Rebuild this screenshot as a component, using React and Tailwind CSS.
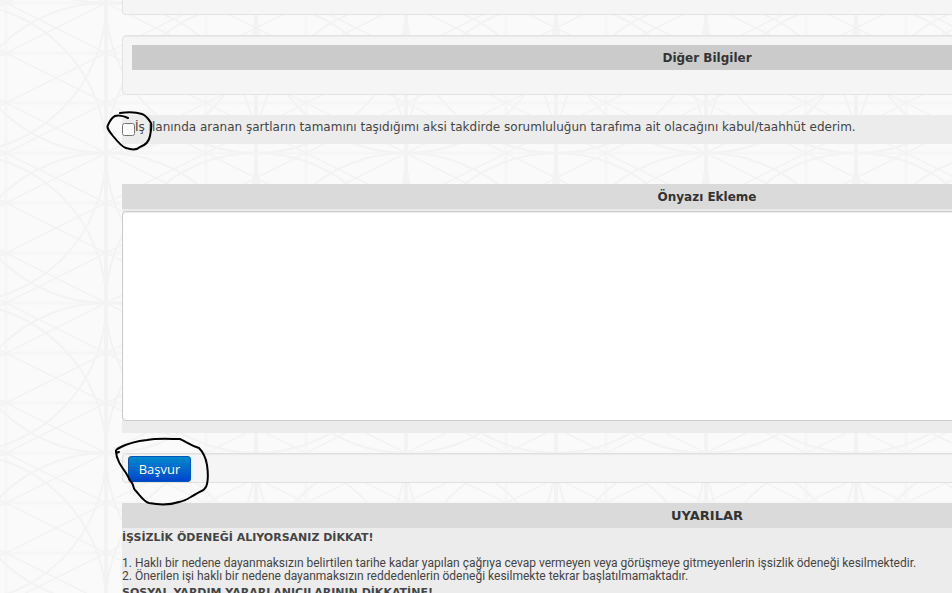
import { useState } from 'react';

const NOTICES = [
  'Haklı bir nedene dayanmaksızın belirtilen tarihe kadar yapılan çağrıya cevap vermeyen veya görüşmeye gitmeyenlerin işsizlik ödeneği kesilmektedir.',
  'Önerilen işi haklı bir nedene dayanmaksızın reddedenlerin ödeneği kesilmekte tekrar başlatılmamaktadır.',
];

function BackgroundPattern() {
  return (
    <svg className="pointer-events-none absolute inset-0 -z-10 h-full w-full" aria-hidden="true">
      <defs>
        <pattern id="lattice" x="106" y="3" width="100" height="50" patternUnits="userSpaceOnUse">
          <path d="M0 0V50M100 0V50M0 0H100M0 50H100" stroke="#f6f6f6" strokeWidth="3" />
          <path d="M0 0L100 50M0 50L100 0" stroke="#f3f3f3" strokeWidth="1.6" />
        </pattern>
        <pattern id="rosette" x="106" y="3" width="150" height="150" patternUnits="userSpaceOnUse">
          <g fill="none" stroke="#f3f3f3" strokeWidth="2">
            <circle cx="0" cy="0" r="150" />
            <circle cx="150" cy="0" r="150" />
            <circle cx="0" cy="150" r="150" />
            <circle cx="150" cy="150" r="150" />
            <path d="M0 0V150M150 0V150" strokeWidth="4" />
          </g>
        </pattern>
      </defs>
      <rect width="100%" height="100%" fill="#fafafa" />
      <rect width="100%" height="100%" fill="url(#lattice)" />
      <rect width="100%" height="100%" fill="url(#rosette)" />
    </svg>
  );
}

function SectionTitle({ children, className = 'bg-[#dadada] text-[12px]' }) {
  return (
    <h2 className={`h-[25px] text-center leading-[26px] font-bold text-[#333] ${className}`}>
      {children}
    </h2>
  );
}

function App() {
  const [accepted, setAccepted] = useState(false);
  const [coverLetter, setCoverLetter] = useState('');

  return (
    <div className="relative isolate h-screen overflow-hidden pl-[122px] font-['DejaVu_Sans',sans-serif] text-[#444]">
      <BackgroundPattern />

      <main className="w-[1170px]">
        <div className="h-[15px] rounded-b border border-t-0 border-[#e3e3e3] bg-[#f5f5f5]" />

        <section className="mt-5 h-[60px] rounded border border-[#e3e3e3] bg-[#f5f5f5] p-[9px] shadow-[inset_0_1px_1px_rgba(0,0,0,0.05)]">
          <SectionTitle className="bg-[#cbcbcb] text-[12px]">Diğer Bilgiler</SectionTitle>
        </section>

        <div className="relative mt-5 h-[29px] bg-[#ececec]">
          <label className="flex items-start text-[12px] leading-6">
            <input
              type="checkbox"
              checked={accepted}
              onChange={(event) => setAccepted(event.target.checked)}
              className="mt-2 size-[13px] shrink-0"
            />
            <span>
              İş ilanında aranan şartların tamamını taşıdığımı aksi takdirde sorumluluğun tarafıma ait olacağını kabul/taahhüt ederim.
            </span>
          </label>
          <svg className="pointer-events-none absolute -top-1 -left-4" width="48" height="42" aria-hidden="true">
            <path
              d="M22 7C18 5 12 4 9 5C5 7 4 10 2 14C0 17 4 21 7 25C11 30 16 36 20 37C26 39 31 39 34 36C40 34 43 30 44 25C45 20 46 15 45 12C42 7 39 4 36 3C30 1 21 1 14 2"
              fill="none"
              stroke="#000"
              strokeWidth="2"
              strokeLinecap="round"
              strokeLinejoin="round"
            />
          </svg>
        </div>

        <section className="mt-10 bg-[#ececec] pb-3">
          <SectionTitle>Önyazı Ekleme</SectionTitle>
          <textarea
            aria-label="Önyazı Ekleme"
            value={coverLetter}
            onChange={(event) => setCoverLetter(event.target.value)}
            className="mt-0.5 block h-[210px] w-full resize-none rounded border border-[#c8cccc] bg-white p-2 text-[12px] shadow-[inset_0_1px_1px_rgba(0,0,0,0.075)] outline-none"
          />
        </section>

        <div className="relative mt-5 h-[30px] rounded border border-[#e0e0e0] bg-[#f5f5f5] px-[5px] py-0.5 shadow-[inset_0_1px_1px_rgba(0,0,0,0.05)]">
          <button
            type="button"
            className="block h-[26px] w-[63px] rounded-[3px] border border-[#0055b8] bg-linear-to-b from-[#0088cc] to-[#0044cc] text-center font-['Open_Sans',sans-serif] text-[13px] leading-6 font-medium text-white"
          >
            Başvur
          </button>
          <svg className="pointer-events-none absolute -top-[17px] -left-2" width="96" height="70" aria-hidden="true">
            <path
              d="M4 15L1 16C0 13 2 12 6 10C12 7 23 4 32 3C42 1 55 2 65 2C70 4 75 8 84 11C89 16 91 22 92 28C93 35 93 43 92 47C91 53 86 54 81 57C75 60 71 64 64 65C55 68 44 68 34 66C28 64 25 58 20 53C18 51 19 49 17 46C14 43 13 39 11 36C6 29 1 22 1 14"
              fill="none"
              stroke="#000"
              strokeWidth="2"
              strokeLinecap="round"
              strokeLinejoin="round"
            />
          </svg>
        </div>

        <section className="mt-5 bg-[#ececec] pb-4 text-[11px] leading-[13px]">
          <SectionTitle className="bg-[#dadada] text-[13px]">UYARILAR</SectionTitle>
          <h3 className="pt-[3px] font-bold">İŞSİZLİK ÖDENEĞİ ALIYORSANIZ DİKKAT!</h3>
          <ol className="mt-[13px] list-inside list-decimal font-['Roboto',sans-serif] text-[12px]">
            {NOTICES.map((notice) => (
              <li key={notice}>{notice}</li>
            ))}
          </ol>
          <h3 className="pt-[3px] font-bold">SOSYAL YARDIM YARARLANICILARININ DİKKATİNE!</h3>
        </section>
      </main>
    </div>
  );
}

export default App;
